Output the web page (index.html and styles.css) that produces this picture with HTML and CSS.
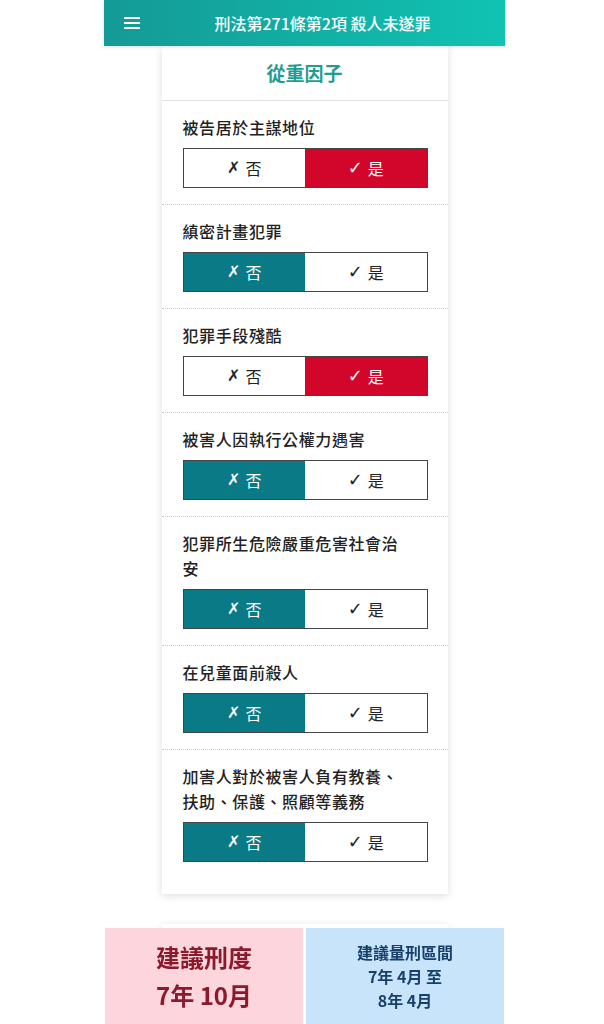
FILE: index.html
```html
<!DOCTYPE html>
<html lang="zh-Hant">
<head>
<meta charset="utf-8">
<title>刑法第271條第2項 殺人未遂罪</title>
<link rel="stylesheet" href="styles.css">
</head>
<body>
<div class="app">
  <header class="topbar">
    <svg class="menu" width="16" height="12" viewBox="0 0 16 12"><rect x="0" y="0" width="16" height="2" fill="#fff"/><rect x="0" y="5" width="16" height="2" fill="#fff"/><rect x="0" y="10" width="16" height="2" fill="#fff"/></svg>
    <div class="title">刑法第271條第2項 殺人未遂罪</div>
  </header>
  <main class="content">
    <section class="card">
      <h2 class="card-title">從重因子</h2>
      <div class="row">
        <div class="label">被告居於主謀地位</div>
        <div class="toggle"><div class="opt"><span class="mark x">✗</span>否</div><div class="opt yes-on"><span class="mark">✓</span>是</div></div>
      </div>
      <div class="row">
        <div class="label">縝密計畫犯罪</div>
        <div class="toggle"><div class="opt no-on"><span class="mark x">✗</span>否</div><div class="opt"><span class="mark">✓</span>是</div></div>
      </div>
      <div class="row">
        <div class="label">犯罪手段殘酷</div>
        <div class="toggle"><div class="opt"><span class="mark x">✗</span>否</div><div class="opt yes-on"><span class="mark">✓</span>是</div></div>
      </div>
      <div class="row">
        <div class="label">被害人因執行公權力遇害</div>
        <div class="toggle"><div class="opt no-on"><span class="mark x">✗</span>否</div><div class="opt"><span class="mark">✓</span>是</div></div>
      </div>
      <div class="row">
        <div class="label">犯罪所生危險嚴重危害社會治安</div>
        <div class="toggle"><div class="opt no-on"><span class="mark x">✗</span>否</div><div class="opt"><span class="mark">✓</span>是</div></div>
      </div>
      <div class="row">
        <div class="label">在兒童面前殺人</div>
        <div class="toggle"><div class="opt no-on"><span class="mark x">✗</span>否</div><div class="opt"><span class="mark">✓</span>是</div></div>
      </div>
      <div class="row last">
        <div class="label">加害人對於被害人負有教養、扶助、保護、照顧等義務</div>
        <div class="toggle"><div class="opt no-on"><span class="mark x">✗</span>否</div><div class="opt"><span class="mark">✓</span>是</div></div>
      </div>
    </section>
    <section class="card card-next"></section>
  </main>
  <footer class="result">
    <div class="panel pink">
      <div class="big">建議刑度</div>
      <div class="big">7年 10月</div>
    </div>
    <div class="panel blue">
      <div class="small">建議量刑區間</div>
      <div class="small">7年 4月 至</div>
      <div class="small">8年 4月</div>
    </div>
  </footer>
</div>
</body>
</html>
```
FILE: styles.css
```css
html, body {
  margin: 0;
  padding: 0;
  background: #fff;
}
body {
  font-family: "Noto Sans CJK TC", "Noto Sans", "DejaVu Sans", sans-serif;
  color: #222;
}
.app {
  width: 401px;
  margin-left: 104px;
  min-height: 1024px;
  position: relative;
}
.topbar {
  height: 46px;
  display: flex;
  align-items: center;
  padding-left: 20px;
  background: linear-gradient(90deg, #149a97 0%, #12aea4 50%, #10c3b2 100%);
  box-shadow: 0 1px 3px rgba(0,0,0,0.15);
  position: relative;
  z-index: 2;
}
.menu {
  display: block;
  flex: none;
}
.title {
  flex: 1;
  text-align: center;
  color: #fff;
  font-size: 16px;
  font-weight: 500;
}
.content {
  display: flex;
  flex-direction: column;
  align-items: center;
  gap: 30px;
}
.card {
  width: 286px;
  background: #fff;
  box-shadow: 0 2px 8px rgba(0,0,0,0.13);
  padding-bottom: 16px;
}
.card-next {
  height: 120px;
  padding: 0;
}
.card-title {
  margin: 0;
  height: 54px;
  line-height: 54px;
  text-align: center;
  font-size: 19px;
  font-weight: 700;
  color: #1f9d90;
  border-bottom: 1px solid #e0e0e0;
}
.row {
  padding: 14px 21px 16px;
  border-bottom: 1px dotted #c8c8c8;
}
.row.last {
  border-bottom: none;
}
.label {
  font-size: 16px;
  line-height: 25px;
  letter-spacing: 0.6px;
  font-weight: 500;
  color: #222;
  margin-bottom: 8px;
  padding-right: 22px;
}
.toggle {
  display: flex;
  height: 40px;
  border: 1px solid #444;
  box-sizing: border-box;
  width: 245px;
}
.opt {
  flex: 1;
  display: flex;
  align-items: center;
  justify-content: center;
  gap: 5px;
  font-size: 16px;
  color: #222;
  background: #fff;
}
.mark {
  font-family: "DejaVu Sans", sans-serif;
  font-size: 18px;
  font-weight: 700;
  line-height: 1;
}
.mark.x {
  font-size: 16px;
  font-weight: 400;
}
.opt.yes-on {
  background: #d1062a;
  color: #fff;
}
.opt.no-on {
  background: #0b7a87;
  color: #fff;
}
.result {
  position: fixed;
  left: 105px;
  top: 928px;
  width: 399px;
  height: 96px;
  display: flex;
  gap: 3px;
  z-index: 3;
}
.panel {
  flex: 1;
  display: flex;
  flex-direction: column;
  align-items: center;
  justify-content: center;
  text-align: center;
}
.pink {
  background: #fdd5dc;
  color: #8a1a2c;
}
.blue {
  background: #c7e4fb;
  color: #183f6a;
}
.big {
  font-size: 24px;
  line-height: 38px;
  font-weight: 700;
}
.small {
  font-size: 16px;
  line-height: 24px;
  font-weight: 700;
}
```
